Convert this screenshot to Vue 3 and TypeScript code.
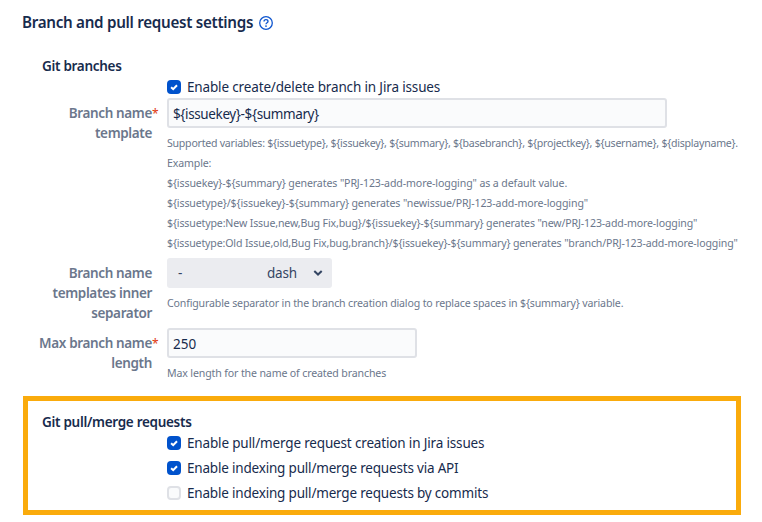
<script setup lang="ts">
import { ref } from 'vue'

interface Option {
  label: string
  checked: boolean
  fit: string
}

const branchEnabled = ref(true)
const template = ref('${issuekey}-${summary}')
const maxLength = ref('250')

const help = [
  { text: 'Supported variables: ${issuetype}, ${issuekey}, ${summary}, ${basebranch}, ${projectkey}, ${username}, ${displayname}.', fit: 'h1' },
  { text: 'Example:', fit: 'h2' },
  { text: '${issuekey}-${summary} generates "PRJ-123-add-more-logging" as a default value.', fit: 'h3' },
  { text: '${issuetype}/${issuekey}-${summary} generates "newissue/PRJ-123-add-more-logging"', fit: 'h4' },
  { text: '${issuetype:New Issue,new,Bug Fix,bug}/${issuekey}-${summary} generates "new/PRJ-123-add-more-logging"', fit: 'h5' },
  { text: '${issuetype:Old Issue,old,Bug Fix,bug,branch}/${issuekey}-${summary} generates "branch/PRJ-123-add-more-logging"', fit: 'h6' },
]
const separatorHelp = 'Configurable separator in the branch creation dialog to replace spaces in ${summary} variable.'

const pullOptions = ref<Option[]>([
  { label: 'Enable pull/merge request creation in Jira issues', checked: true, fit: 'o1' },
  { label: 'Enable indexing pull/merge requests via API', checked: true, fit: 'o2' },
  { label: 'Enable indexing pull/merge requests by commits', checked: false, fit: 'o3' },
])
</script>

<template>
  <main class="settings">
    <h2 class="title">
      <span>Branch and pull request settings</span>
      <svg class="help-icon" width="14" height="14" viewBox="0 0 14 14" fill="none">
        <circle cx="7" cy="7" r="6.3" stroke="#0f56cf" stroke-width="1.3" />
        <path d="M5 5.6C5 4.4 5.8 3.7 7 3.7S9 4.4 9 5.4C9 6.7 7 6.7 7 8.2" stroke="#0f56cf" stroke-width="1.3" />
        <circle cx="7" cy="10.1" r=".9" fill="#0f56cf" />
      </svg>
    </h2>

    <section class="branches">
      <h3>Git branches</h3>
      <label class="check first">
        <input v-model="branchEnabled" type="checkbox" />
        <span class="box"><svg viewBox="0 0 14 14"><path d="M4.1 7.2 6.2 9.2 10 5.2" /></svg></span>
        <span class="o0">Enable create/delete branch in Jira issues</span>
      </label>

      <div class="field template-field">
        <div class="label"><span class="req">Branch name<i>*</i></span><br />template</div>
        <div class="control">
          <input v-model="template" class="text wide" type="text" />
          <div class="help">
            <p v-for="line in help" :key="line.text"><span :class="line.fit">{{ line.text }}</span></p>
          </div>
        </div>
      </div>

      <div class="field separator-field">
        <div class="label">Branch name<br />templates inner<br />separator</div>
        <div class="control">
          <div class="select">
            <span class="mark">-</span>
            <span class="name">dash</span>
            <svg width="10" height="6" viewBox="0 0 10 6"><path d="M1.3 1 5 4.5 8.7 1" /></svg>
          </div>
          <div class="help"><p><span class="h7">{{ separatorHelp }}</span></p></div>
        </div>
      </div>

      <div class="field length-field">
        <div class="label"><span class="req">Max branch name<i>*</i></span><br />length</div>
        <div class="control">
          <input v-model="maxLength" class="text medium" type="text" />
          <div class="help"><p><span class="h8">Max length for the name of created branches</span></p></div>
        </div>
      </div>
    </section>

    <section class="pulls">
      <h3>Git pull/merge requests</h3>
      <label v-for="option in pullOptions" :key="option.label" class="check">
        <input v-model="option.checked" type="checkbox" />
        <span class="box"><svg viewBox="0 0 14 14"><path d="M4.1 7.2 6.2 9.2 10 5.2" /></svg></span>
        <span :class="option.fit">{{ option.label }}</span>
      </label>
    </section>
  </main>
</template>

<style>
body {
  background: #fff;
}
</style>

<style scoped>
.settings {
  box-sizing: border-box;
  width: 762px;
  height: 522px;
  padding-top: 10px;
  overflow: hidden;
  color: #172b4d;
  font: 13.5px/20px "Noto Sans", sans-serif;
  white-space: nowrap;
}
.title {
  display: flex;
  align-items: center;
  gap: 6px;
  height: 24px;
  margin: 0 0 22px 22px;
  font-size: 15.2px;
  font-weight: 600;
  letter-spacing: -0.29px;
}
.title span {
  width: 231px;
}
.help-icon {
  margin-top: 2px;
}
h3 {
  height: 20px;
  margin: 0 0 0 42px;
  font-size: 13.5px;
  font-weight: 600;
  letter-spacing: -0.3px;
}
.check {
  display: flex;
  align-items: center;
  gap: 6px;
  height: 25px;
  margin-left: 167px;
}
.check.first {
  height: 22px;
}
.check input {
  display: none;
}
.o0 {
  letter-spacing: -0.15px;
}
.o1 {
  letter-spacing: -0.16px;
}
.o2,
.o3 {
  letter-spacing: -0.19px;
}
.box {
  box-sizing: border-box;
  width: 14px;
  height: 14px;
  border: 2px solid #dfe1e6;
  border-radius: 4px;
  background: #fafbfc;
}
.box svg {
  display: none;
  width: 14px;
  height: 14px;
}
.box path {
  fill: none;
  stroke: #fff;
  stroke-width: 2;
}
input:checked + .box {
  border: 0;
  background: #0052cc;
}
input:checked + .box svg {
  display: block;
}
.field {
  display: grid;
  grid-template-columns: 152px 1fr;
  column-gap: 15px;
}
.template-field {
  height: 160px;
}
.separator-field {
  height: 70px;
}
.length-field {
  height: 68px;
}
.label {
  padding-top: 5px;
  color: #6b778c;
  font-weight: 600;
  letter-spacing: -0.36px;
  text-align: right;
}
.req {
  position: relative;
}
.req i {
  position: absolute;
  top: 0;
  left: 100%;
  color: #de350b;
  font-size: 12px;
  font-style: normal;
  font-weight: 400;
}
.text {
  display: block;
  box-sizing: border-box;
  height: 30px;
  padding: 1px 4px 0;
  border: 2px solid #dfe1e6;
  border-radius: 3px;
  outline: 0;
  background: #fafbfc;
  color: #172b4d;
  font: inherit;
}
.wide {
  width: 500px;
  letter-spacing: -0.38px;
}
.medium {
  width: 250px;
}
.help {
  padding-top: 5px;
  color: #6b778c;
  font-size: 10.6px;
  letter-spacing: -0.14px;
}
.help p {
  margin: 0;
}
.h1 {
  letter-spacing: -0.252px;
}
.h3 {
  letter-spacing: -0.11px;
}
.h4 {
  letter-spacing: -0.125px;
}
.h6 {
  letter-spacing: -0.15px;
}
.h7 {
  letter-spacing: -0.155px;
}
.h8 {
  letter-spacing: -0.14px;
}
.select {
  display: grid;
  grid-template-columns: 89px 46px 10px;
  align-items: center;
  box-sizing: border-box;
  width: 165px;
  height: 30px;
  padding-left: 11px;
  border-radius: 3px;
  background: #ebecf0;
  color: #344563;
}
.name {
  letter-spacing: -0.2px;
}
.select path {
  fill: none;
  stroke: #344563;
  stroke-width: 2;
}
.pulls {
  box-sizing: border-box;
  width: 718px;
  height: 119px;
  margin-left: 23px;
  padding-top: 11px;
  border: 5px solid #faab0c;
}
.pulls h3 {
  height: 18px;
  margin-left: 14px;
}
.pulls .check {
  margin-left: 139px;
}
</style>
